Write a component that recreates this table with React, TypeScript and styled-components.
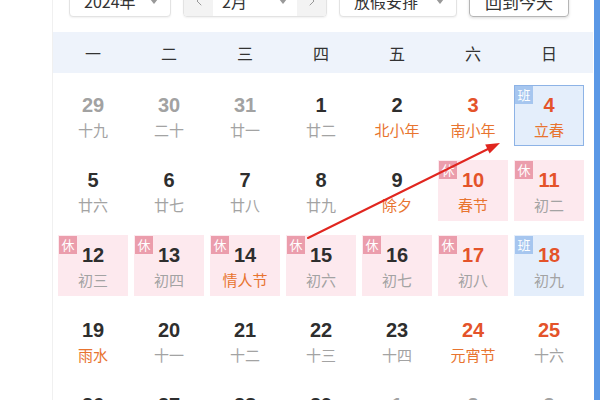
import React from "react";
import styled, { createGlobalStyle } from "styled-components";
import { ChevronLeft, ChevronRight } from "lucide-react";

const Global = createGlobalStyle`
  html, body { margin: 0; padding: 0; background: #ffffff; }
  body { width: 600px; height: 400px; overflow: hidden; font-family: "Noto Sans CJK SC", "Noto Sans", sans-serif; }
  * { box-sizing: border-box; }
`;

const Page = styled.div`
  position: relative;
  display: flex;
  width: 600px;
  height: 400px;
  overflow: hidden;
`;

const Gutter = styled.div`
  width: 52px;
  flex: none;
`;

const Panel = styled.div`
  width: 541px;
  flex: none;
  border-left: 1px solid #f0f0f0;
  display: flex;
  flex-direction: column;
  & > * { flex: none; }
`;

const ScrollStrip = styled.div`
  width: 6px;
  margin-left: auto;
  flex: none;
  background: #5a98e6;
`;

const Toolbar = styled.div`
  display: flex;
  align-items: center;
  gap: 12px;
  margin-top: -15px;
  padding-left: 16px;
  height: 32px;
`;

const Select = styled.div<{ $w: number }>`
  width: ${(p) => p.$w}px;
  height: 32px;
  border: 1px solid #e3e3e3;
  border-radius: 4px;
  box-shadow: 0 1px 2px rgba(0, 0, 0, 0.06);
  display: flex;
  align-items: center;
  justify-content: space-between;
  padding: 0 12px 0 14px;
  font-size: 16px;
  color: #333;
  background: #fff;
`;

const Caret = styled.span`
  width: 0;
  height: 0;
  border-left: 4px solid transparent;
  border-right: 4px solid transparent;
  border-top: 5px solid #999;
`;

const MonthGroup = styled.div`
  height: 32px;
  display: flex;
  border: 1px solid #e3e3e3;
  border-radius: 4px;
  overflow: hidden;
  box-shadow: 0 1px 2px rgba(0, 0, 0, 0.06);
`;

const ArrowBtn = styled.div`
  width: 29px;
  background: #f3f3f3;
  display: flex;
  align-items: center;
  justify-content: center;
  color: #999;
`;

const MonthLabel = styled.div`
  width: 84px;
  display: flex;
  align-items: center;
  justify-content: space-between;
  padding: 0 10px 0 9px;
  font-size: 16px;
  color: #333;
`;

const TodayButton = styled.div`
  width: 100px;
  height: 32px;
  border: 1px solid #b5b5b5;
  border-radius: 4px;
  box-shadow: 0 1px 3px rgba(0, 0, 0, 0.15);
  display: flex;
  align-items: center;
  justify-content: center;
  font-size: 17px;
  color: #333;
`;

const WeekBand = styled.div`
  margin-top: 15px;
  height: 41px;
  background: #eef3fb;
  display: grid;
  grid-template-columns: repeat(7, 70px);
  column-gap: 6px;
  padding-left: 5px;
  align-items: center;
`;

const WeekLabel = styled.div`
  text-align: center;
  font-size: 16px;
  color: #333;
`;

const Grid = styled.div`
  display: grid;
  grid-template-columns: repeat(7, 70px);
  grid-auto-rows: 61px;
  column-gap: 6px;
  row-gap: 14px;
  padding: 12px 0 0 5px;
`;

type Kind = "plain" | "rest" | "work" | "today";

const bgFor: Record<Kind, string> = {
  plain: "transparent",
  rest: "#fde9ee",
  work: "#e4eefb",
  today: "#e4eefb",
};

const Cell = styled.div<{ $kind: Kind }>`
  position: relative;
  background: ${(p) => bgFor[p.$kind]};
  border: 1px solid ${(p) => (p.$kind === "today" ? "#8db3e6" : "transparent")};
  display: flex;
  flex-direction: column;
  align-items: center;
  padding-top: 7px;
`;

const Num = styled.div<{ $tone: "dark" | "red" | "muted" }>`
  font-family: "Liberation Sans", Arial, sans-serif;
  font-weight: bold;
  font-size: 20px;
  line-height: 24px;
  color: ${(p) => (p.$tone === "red" ? "#e4532a" : p.$tone === "muted" ? "#a2a2a2" : "#2e2e2e")};
`;

const Lunar = styled.div<{ $fest: boolean }>`
  margin-top: 3px;
  font-size: 15px;
  line-height: 20px;
  color: ${(p) => (p.$fest ? "#e8742f" : "#a3a3a3")};
`;

const Badge = styled.span<{ $work: boolean }>`
  position: absolute;
  top: 0;
  left: 0;
  width: 18px;
  height: 18px;
  background: ${(p) => (p.$work ? "#a6c6ef" : "#eb9dac")};
  color: #fff;
  font-size: 13px;
  line-height: 18px;
  text-align: center;
`;

const Overlay = styled.svg`
  position: absolute;
  left: 0;
  top: 0;
  width: 600px;
  height: 400px;
  pointer-events: none;
`;

type Day = {
  n: number;
  l: string;
  tone?: "dark" | "red" | "muted";
  fest?: boolean;
  kind?: Kind;
};

const days: Day[] = [
  { n: 29, l: "十九", tone: "muted" },
  { n: 30, l: "二十", tone: "muted" },
  { n: 31, l: "廿一", tone: "muted" },
  { n: 1, l: "廿二" },
  { n: 2, l: "北小年", fest: true },
  { n: 3, l: "南小年", fest: true, tone: "red" },
  { n: 4, l: "立春", fest: true, tone: "red", kind: "today" },
  { n: 5, l: "廿六" },
  { n: 6, l: "廿七" },
  { n: 7, l: "廿八" },
  { n: 8, l: "廿九" },
  { n: 9, l: "除夕", fest: true },
  { n: 10, l: "春节", fest: true, tone: "red", kind: "rest" },
  { n: 11, l: "初二", tone: "red", kind: "rest" },
  { n: 12, l: "初三", kind: "rest" },
  { n: 13, l: "初四", kind: "rest" },
  { n: 14, l: "情人节", fest: true, kind: "rest" },
  { n: 15, l: "初六", kind: "rest" },
  { n: 16, l: "初七", kind: "rest" },
  { n: 17, l: "初八", tone: "red", kind: "rest" },
  { n: 18, l: "初九", tone: "red", kind: "work" },
  { n: 19, l: "雨水", fest: true },
  { n: 20, l: "十一" },
  { n: 21, l: "十二" },
  { n: 22, l: "十三" },
  { n: 23, l: "十四" },
  { n: 24, l: "元宵节", fest: true, tone: "red" },
  { n: 25, l: "十六", tone: "red" },
  { n: 26, l: "十七" },
  { n: 27, l: "十八" },
  { n: 28, l: "十九" },
  { n: 29, l: "二十" },
  { n: 1, l: "廿一", tone: "muted" },
  { n: 2, l: "廿二", tone: "muted" },
  { n: 3, l: "廿三", tone: "muted" },
];

const weekdays = ["一", "二", "三", "四", "五", "六", "日"];

export default function App() {
  return (
    <>
      <Global />
      <Page>
        <Gutter />
        <Panel>
          <Toolbar>
            <Select $w={102}>
              <span>2024年</span>
              <Caret />
            </Select>
            <MonthGroup>
              <ArrowBtn>
                <ChevronLeft size={16} strokeWidth={1.5} />
              </ArrowBtn>
              <MonthLabel>
                <span>2月</span>
                <Caret />
              </MonthLabel>
              <ArrowBtn>
                <ChevronRight size={16} strokeWidth={1.5} />
              </ArrowBtn>
            </MonthGroup>
            <Select $w={118}>
              <span>放假安排</span>
              <Caret />
            </Select>
            <TodayButton>回到今天</TodayButton>
          </Toolbar>
          <WeekBand>
            {weekdays.map((w) => (
              <WeekLabel key={w}>{w}</WeekLabel>
            ))}
          </WeekBand>
          <Grid>
            {days.map((d, i) => {
              const kind = d.kind ?? "plain";
              return (
                <Cell key={i} $kind={kind}>
                  {kind === "rest" && <Badge $work={false}>休</Badge>}
                  {(kind === "work" || kind === "today") && <Badge $work>班</Badge>}
                  <Num $tone={d.tone ?? "dark"}>{d.n}</Num>
                  <Lunar $fest={!!d.fest}>{d.l}</Lunar>
                </Cell>
              );
            })}
          </Grid>
        </Panel>
        <ScrollStrip />
        <Overlay viewBox="0 0 600 400">
          <line x1="308" y1="238" x2="488" y2="149" stroke="#e0261f" strokeWidth="2" strokeLinecap="round" />
          <polygon points="500,143 489.6,153.6 485.2,144.6" fill="#e0261f" />
        </Overlay>
      </Page>
    </>
  );
}
